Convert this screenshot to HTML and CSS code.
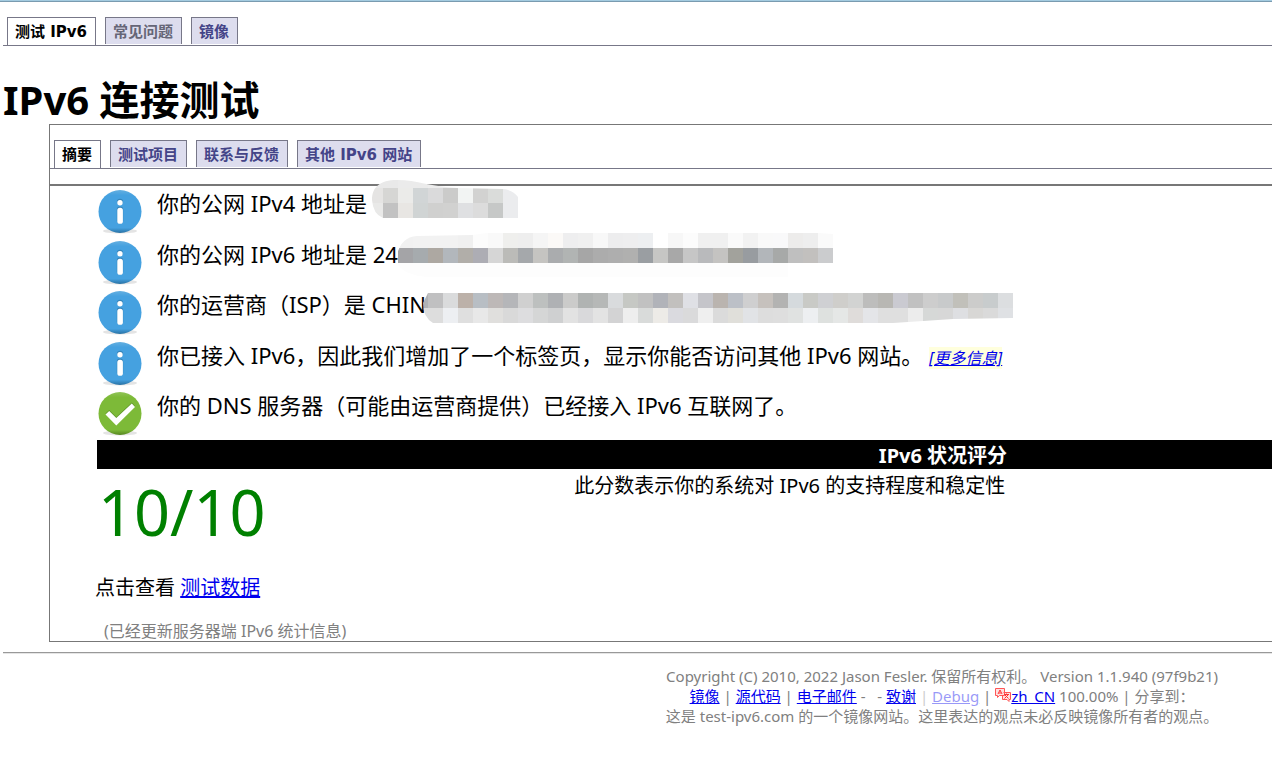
FILE: index.html
```
<!DOCTYPE html>
<html lang="zh-CN">
<head>
  <meta charset="UTF-8">
  <meta name="viewport" content="width=device-width, initial-scale=1.0">
  <title>IPv6 连接测试</title>
  <link rel="stylesheet" href="styles.css">
</head>
<body>
  <!-- Shared icons -->
  <svg class="defs" width="0" height="0" aria-hidden="true">
    <defs>
      <linearGradient id="blue" x1="0" y1="0" x2="0" y2="1">
        <stop offset="0" stop-color="#64afe0"/>
        <stop offset="0.12" stop-color="#45a1e0"/>
        <stop offset="0.88" stop-color="#45a1e0"/>
        <stop offset="1" stop-color="#2871a3"/>
      </linearGradient>
      <linearGradient id="green" x1="0" y1="0" x2="0" y2="1">
        <stop offset="0" stop-color="#91c459"/>
        <stop offset="0.12" stop-color="#7dba38"/>
        <stop offset="0.88" stop-color="#7dba38"/>
        <stop offset="1" stop-color="#558520"/>
      </linearGradient>
      <symbol id="info" viewBox="0 0 46 46">
        <ellipse cx="23" cy="42" rx="17" ry="2.5" fill="#e4e4e4"/>
        <circle cx="23" cy="22.5" r="21.5" fill="url(#blue)"/>
        <g fill="#3585bb"><circle cx="23" cy="12.8" r="3.1"/><rect x="19.8" y="17.5" width="6.4" height="17" rx="3"/></g>
        <g fill="#fff"><circle cx="23" cy="13.8" r="2.7"/><rect x="20.3" y="18.8" width="5.6" height="16" rx="2.6"/></g>
      </symbol>
      <symbol id="ok" viewBox="0 0 46 46">
        <ellipse cx="23" cy="42" rx="17" ry="2.5" fill="#e4e4e4"/>
        <circle cx="23" cy="22.5" r="21.5" fill="url(#green)"/>
        <path d="M8.5 22.5 12.2 19 19.3 26 34.8 11.5 38 15 19.3 33.5Z" fill="#5f962a"/>
        <path d="M8.5 23.5 12.2 20 19.3 27 34.8 12.5 38 16 19.3 34.5Z" fill="#fff"/>
      </symbol>
    </defs>
  </svg>

  <div class="page">
    <ul class="tabs">
      <li><a class="active" href="#">测试 IPv6</a></li>
      <li><a class="visited" href="#faq">常见问题</a></li>
      <li><a href="#mirrors">镜像</a></li>
    </ul>

    <h1>IPv6 连接测试</h1>

    <div class="box">
      <ul class="tabs inner">
        <li><a class="active" href="#summary">摘要</a></li>
        <li><a href="#tests">测试项目</a></li>
        <li><a href="#contact">联系与反馈</a></li>
        <li><a href="#sites">其他 IPv6 网站</a></li>
      </ul>

      <div class="content">
        <div class="results">
          <div class="result">
            <svg class="icon"><use href="#info"/></svg>
            <p>你的公网 IPv4 地址是</p>
            <svg class="mask mask-v4" id="mask-v4" width="146" height="38"></svg>
          </div>
          <div class="result">
            <svg class="icon"><use href="#info"/></svg>
            <p>你的公网 IPv6 地址是 24</p>
            <svg class="mask mask-v6" id="mask-v6" width="436" height="44"></svg>
          </div>
          <div class="result">
            <svg class="icon"><use href="#info"/></svg>
            <p>你的运营商（ISP）是 CHIN</p>
            <svg class="mask mask-isp" id="mask-isp" width="590" height="30"></svg>
          </div>
          <div class="result">
            <svg class="icon"><use href="#info"/></svg>
            <p>你已接入 IPv6，因此我们增加了一个标签页，显示你能否访问其他 IPv6 网站。 <a class="more" href="#more">[更多信息]</a></p>
          </div>
          <div class="result">
            <svg class="icon"><use href="#ok"/></svg>
            <p>你的 DNS 服务器（可能由运营商提供）已经接入 IPv6 互联网了。</p>
          </div>
        </div>

        <h2>IPv6 状况评分</h2>
        <div class="score-row">
          <div class="score">10/10</div>
          <div class="score-note">此分数表示你的系统对 IPv6 的支持程度和稳定性</div>
        </div>
        <p class="data">点击查看 <a href="#data">测试数据</a></p>
        <p class="updated">(已经更新服务器端 IPv6 统计信息)</p>
      </div>
    </div>

    <hr>
    <footer class="footer">
      <div>Copyright (C) 2010, 2022 Jason Fesler. 保留所有权利。 Version 1.1.940 (97f9b21)</div>
      <div><a href="#mirrors">镜像</a> | <a href="#source">源代码</a> | <a href="#email">电子邮件</a> - &nbsp; - <a href="#thanks">致谢</a> <span class="faded">| <a href="#debug">Debug</a></span> | <svg class="lang" viewBox="0 0 16 14" aria-hidden="true"><path d="M.5.5h9v7h-5l-2 2v-2h-2zM8.5 4.5h7v7h-1.500v2l-2-2h-4.500v-4" fill="#ffe0e0" stroke="#f55"/><path d="M3 6 5 2l2 4M4 5h2M9 6.500h5M11.500 5.500v1M13 7l-3.500 3.500M10 7l3.500 3.500" fill="none" stroke="#f33"/></svg><a href="#lang">zh_CN</a> 100.00% | 分享到：</div>
      <div>这是 test-ipv6.com 的一个镜像网站。这里表达的观点未必反映镜像所有者的观点。</div>
    </footer>
  </div>

  <script>
    // Each mask: outline path, x of the first cell, and rows of 15px cells
    const masks = {
      'mask-v4': {
        shape: 'M0 20C0 7 8 0 25 0C45 0 60 7 85 8L131 9Q141 10 146 17V38H11Q1 34 0 20Z',
        x: -4,
        rows: [
          { y: 0, h: 8, cells: 'e9e9e9 e9e9e9 ebebeb ebebeb ededed ededed eeeeee eeeeee eeeeee eeeeee' },
          { y: 8, h: 15, cells: 'e5e4e3 d6d6d4 ebebe9 d1d5d6 dadadb cbcbca f2f4f3 d2d2d1 dadcda ebecee' },
          { y: 23, h: 15, cells: 'e9e9e8 c2c2c2 e8e6e3 d0d4d4 d0d0cf d1d1d0 dfe0e2 dcdcdc c6c8c7 ebecee' }
        ]
      },
      'mask-v6': {
        shape: 'M0 22Q4 4 20 3L75 2 90 0H421L436 1V30H391V44H30Q6 42 0 30Z',
        x: 1,
        rows: [
          { y: 0, h: 15, cells: 'f1f1f1 f2f2f2 f2f2f2 f2f2f2 f0f0f0 fcfcfc f9f9f9 efefed eeeeee f5f5f5 fbf9f7 eeeeef f0f0f0 f8f8f8 ededee eeeeef edeff1 ffffff f7f7f7 fcfcfc f0f0f0 f0f0f0 fafafa f2f2f2 f9f9f9 f9f9fa edeceb eeeeee fafafa' },
          { y: 15, h: 15, cells: 'a4a4a7 a6abae ada8a2 b2b7bc b1aea9 adadb4 d6d6d6 bbbbb8 a5a8ab c5c4c1 aaacae b1b4b3 a6a6a6 acacac aeaeae b0b0af 9a9ea2 c6c6c4 a8a8a8 c6c6c6 b9babc c4c3c1 a2a29c 989ca0 b2b6ba a7a9a8 bfbfbf c2c0be cbccce' },
          { y: 30, h: 14, cells: Array(27).fill('fdfdfd').join(' ') }
        ]
      },
      'mask-isp': {
        shape: 'M5 0H590V25L530 26 500 28 470 30H10Q0 24 0 10Z',
        x: -10,
        rows: [
          { y: 0, h: 15, cells: 'b0b2b5 c0c0c1 dadbdc bcb1a9 b8bec4 bdb8b7 b5b6b9 d0d0d0 bdc0bf afb1b4 cbcbca b0b3b2 b6b8b7 d9dbdd c6c8c4 c1c1c1 b1b3b9 c2c0be dfe0e5 c5c5ca bab4af bcc0c7 cfcfd0 c6c1bd b3b3b2 d5dadd c9cac6 cfd0d3 cfcecb d2d3d2 bdbdbc b8b7b3 cacad1 c1c1c1 cdcdcd c8cacb c1c0ba cccccb c8cccd dcdee0' },
          { y: 15, h: 15, cells: 'dddddd dddddd edeff2 dfdfdf e8e8e8 e0dfdd d9d9d9 dddddf d5d6d6 cfd0d1 e2e2e2 d9d9db e3e3e3 d3d3d4 eeeeee d9dbda edebe7 dadadf dadadb efefef dbdbdb e0dfda e1e3e6 dddddd dedede e0e2e1 edeff1 dee1df e5e7e6 dfdcda e4e5e8 dfdfdf dfdfdf ececec d6d8d7 d7d7d7 dedfe2 d8d7d5 dadada dfe1e4' }
        ]
      }
    };

    const NS = 'http://www.w3.org/2000/svg';

    function drawMask(id, mask) {
      const svg = document.getElementById(id);
      const clip = document.createElementNS(NS, 'clipPath');
      const outline = document.createElementNS(NS, 'path');
      const group = document.createElementNS(NS, 'g');
      clip.id = id + '-clip';
      outline.setAttribute('d', mask.shape);
      clip.appendChild(outline);
      group.setAttribute('clip-path', `url(#${clip.id})`);
      mask.rows.forEach(row => {
        row.cells.split(' ').forEach((color, i) => {
          const cell = document.createElementNS(NS, 'rect');
          cell.setAttribute('x', mask.x + i * 15);
          cell.setAttribute('y', row.y);
          cell.setAttribute('width', 15);
          cell.setAttribute('height', row.h);
          cell.setAttribute('fill', '#' + color);
          group.appendChild(cell);
        });
      });
      svg.append(clip, group);
    }

    Object.keys(masks).forEach(id => drawMask(id, masks[id]));
  </script>
</body>
</html>
```
FILE: styles.css
```
* {
  box-sizing: border-box;
}

body {
  margin: 0;
  background-color: #fff;
  color: #000;
  font-family: "Noto Sans", "Noto Sans CJK SC", sans-serif;
  border-top: 1px solid #a3cbe0;
}

.defs {
  position: absolute;
}

a {
  color: #00e;
}

.page {
  padding-left: 3px;
}

.page::before {
  content: "";
  display: block;
  height: 1px;
  margin-left: -3px;
  background-color: #7a9bb0;
}

/* Tabs */
.tabs {
  display: flex;
  gap: 9px;
  margin: 0;
  padding: 15px 4px 0;
  list-style: none;
  border-bottom: 1px solid #778;
  font: bold 15px/28px "DejaVu Sans", "Noto Sans CJK SC", sans-serif;
}

.tabs a {
  display: block;
  padding: 0 8px 0 7px;
  height: 27px;
  margin-bottom: 1px;
  border: 1px solid #778;
  border-bottom: none;
  background-color: #dde;
  color: #448;
  text-decoration: none;
}

.tabs a.visited {
  color: #667;
}

.tabs a.active {
  height: 28px;
  margin-bottom: 0;
  background-color: #fff;
  color: #000;
}

h1 {
  margin: 30px 0 0;
  font-size: 40px;
  line-height: 48px;
}

.box {
  margin-left: 46px;
  border: 1px solid #777;
  border-right: none;
}

.content {
  margin-top: 15px;
  padding: 1px 0 0 47px;
  border-top: 2px solid #777;
}

/* Result rows */
.results {
  display: grid;
  grid-template-rows: repeat(5, 1fr);
  min-height: 253px;
}

.result {
  position: relative;
  display: flex;
  gap: 14px;
}

.result p {
  margin: 0;
  font-size: 22px;
  line-height: 32px;
}

.icon {
  flex: none;
  width: 46px;
  height: 46px;
  margin-top: 2px;
}

.more {
  background-color: #ffd;
  font-size: 16px;
  font-style: italic;
}

.mask {
  position: absolute;
}

.mask-v4 {
  left: 275px;
  top: -7px;
}

.mask-v6 {
  left: 300px;
  top: -5px;
}

.mask-isp {
  left: 326px;
  top: 5px;
}

/* Score */
h2 {
  margin: 0;
  padding: 2px 0 0 44%;
  background-color: #000;
  color: #fff;
  font-size: 20px;
  line-height: 27px;
  text-align: center;
}

.score-row {
  display: flex;
  gap: 42px;
}

.score {
  padding-left: 1px;
  color: green;
  font-size: 63px;
  line-height: 86px;
}

.score-note {
  flex: 1;
  font-size: 20px;
  line-height: 34px;
  text-align: center;
}

.data {
  margin: 18px 0 0 -2px;
  font-size: 20px;
  line-height: 30px;
}

.updated {
  margin: 18px 0 0;
  padding-left: 7px;
  color: gray;
  font-size: 16px;
  line-height: 20px;
}

hr {
  margin: 10px 0 0;
  border: none;
  border-top: 1px solid #999;
  border-bottom: 1px solid #e5e5e5;
}

/* Footer */
.footer {
  padding: 12px 0 0 48%;
  color: gray;
  font-size: 15px;
  line-height: 20px;
  text-align: center;
}

.faded {
  opacity: 0.4;
}

.lang {
  width: 16px;
  height: 14px;
}
```
